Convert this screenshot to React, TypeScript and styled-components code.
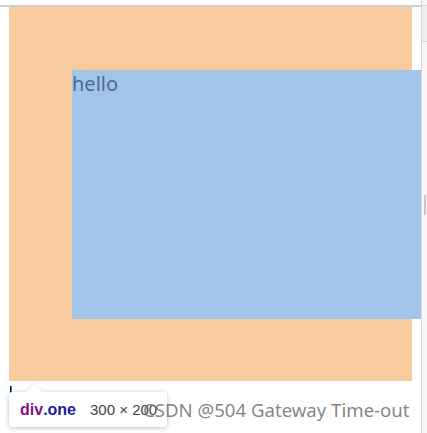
import React from "react";
import styled, { createGlobalStyle } from "styled-components";

const GlobalStyle = createGlobalStyle`
  html, body {
    margin: 0;
    padding: 0;
    background: #ffffff;
    overflow: hidden;
  }
`;

function App() {
  return (
    <>
      <GlobalStyle />
      <Window>
        <Viewport>
          <TopRule />
          <Page>
            <One>
              <Two>hello</Two>
            </One>
            <Caret />
          </Page>
          <Tooltip>
            <TagName>div</TagName>
            <ClassName>.one</ClassName>
            <Size>300 × 200</Size>
          </Tooltip>
          <Watermark>CSDN @504 Gateway Time-out</Watermark>
        </Viewport>
        <Scrollbar>
          <ScrollCap />
          <Thumb />
        </Scrollbar>
      </Window>
    </>
  );
}

const Window = styled.div`
  display: flex;
  width: 427px;
  height: 433px;
  overflow: hidden;
`;

const Viewport = styled.div`
  position: relative;
  flex: 1;
  display: flex;
  flex-direction: column;
  padding-top: 5px;
`;

const TopRule = styled.div`
  flex-shrink: 0;
  height: 2px;
  background-color: #cfcfcf;
`;

const Page = styled.div`
  position: relative;
  padding-left: 9px;
`;

const One = styled.div`
  width: 403px;
  height: 374px;
  padding: 63px 0 0 63px;
  box-sizing: border-box;
  background-color: #f8cc9f;
`;

const Two = styled.div`
  width: 350px;
  height: 249px;
  background-color: #a1c4e8;
  color: #4b6a91;
  font-family: "Noto Sans", "Open Sans", sans-serif;
  font-size: 20px;
  line-height: 28px;
`;

const Caret = styled.div`
  position: absolute;
  left: 10px;
  top: 379px;
  width: 2px;
  height: 7px;
  background: linear-gradient(90deg, #111 50%, #1e88e5 50%);
`;

const Tooltip = styled.div`
  position: absolute;
  left: 9px;
  top: 392px;
  width: 158px;
  height: 35px;
  display: flex;
  align-items: center;
  padding-left: 11px;
  box-sizing: border-box;
  background: #ffffff;
  border-radius: 3px;
  box-shadow: 0 1px 5px rgba(0, 0, 0, 0.25);
  font-family: "Liberation Sans", Arial, sans-serif;
  font-size: 16px;

  &::before {
    content: "";
    position: absolute;
    left: 17px;
    top: -8px;
    border-left: 8px solid transparent;
    border-right: 8px solid transparent;
    border-bottom: 8px solid #ffffff;
    filter: drop-shadow(0 -1px 1px rgba(0, 0, 0, 0.08));
  }
`;

const TagName = styled.span`
  color: #881280;
  font-weight: bold;
`;

const ClassName = styled.span`
  color: #1a1aa6;
  font-weight: bold;
`;

const Size = styled.span`
  margin-left: 14px;
  color: #444444;
  font-size: 15px;
  white-space: nowrap;
`;

const Watermark = styled.div`
  position: absolute;
  left: 143px;
  top: 397px;
  color: rgba(110, 110, 110, 0.85);
  font-family: "Noto Sans", "Open Sans", sans-serif;
  font-size: 18.6px;
  line-height: 26px;
  white-space: nowrap;
`;

const Scrollbar = styled.div`
  position: relative;
  width: 5px;
  border-left: 1px solid #d8d8d8;
  background-color: #f5f5f5;
`;

const ScrollCap = styled.div`
  margin-top: 5px;
  height: 35px;
  border-top: 1px solid #d6d6d6;
  border-bottom: 1px solid #d6d6d6;
  background-color: #eeeeee;
`;

const Thumb = styled.div`
  position: absolute;
  left: 2px;
  top: 195px;
  width: 2px;
  height: 20px;
  background-color: #c8c8c8;
`;

export default App;
